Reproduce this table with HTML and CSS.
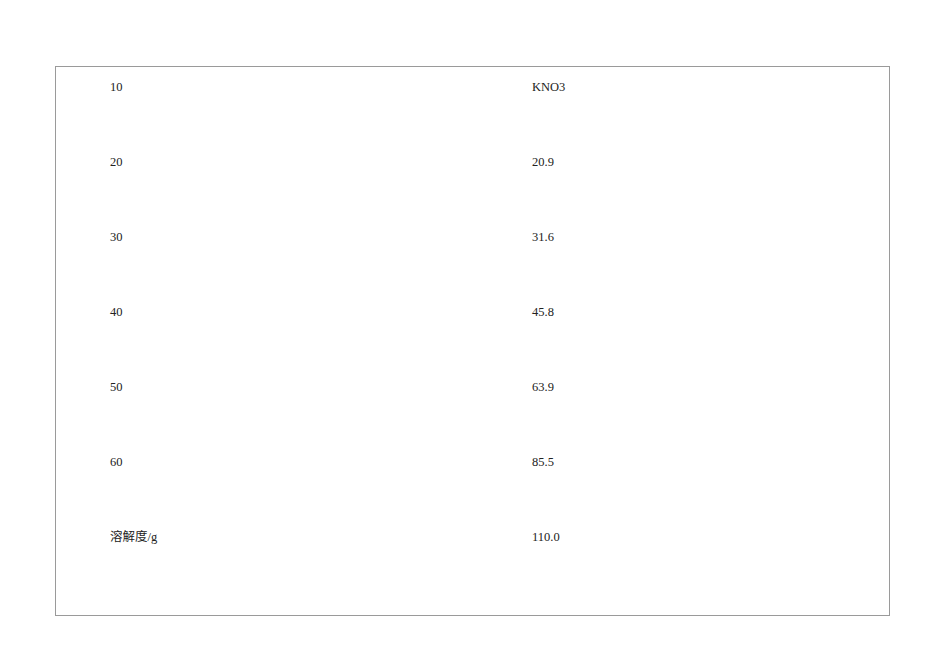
FILE: index.html
```html
<!DOCTYPE html>
<html lang="zh">
<head>
<meta charset="utf-8">
<link rel="stylesheet" href="styles.css">
</head>
<body>
<div class="sheet">
  <div class="row"><span class="cell">10</span><span class="cell">KNO3</span></div>
  <div class="row"><span class="cell">20</span><span class="cell">20.9</span></div>
  <div class="row"><span class="cell">30</span><span class="cell">31.6</span></div>
  <div class="row"><span class="cell">40</span><span class="cell">45.8</span></div>
  <div class="row"><span class="cell">50</span><span class="cell">63.9</span></div>
  <div class="row"><span class="cell">60</span><span class="cell">85.5</span></div>
  <div class="row"><span class="cell">溶解度/g</span><span class="cell">110.0</span></div>
</div>
</body>
</html>
```
FILE: styles.css
```css
html, body {
  margin: 0;
  padding: 0;
  background: #fff;
}
body {
  font-family: "Liberation Serif", "Noto Sans CJK SC", serif;
  font-size: 12.5px;
  color: #222;
}
.sheet {
  box-sizing: border-box;
  margin: 66px 0 0 55px;
  width: 835px;
  height: 550px;
  border: 1px solid #9a9a9a;
  padding: 13px 0 0 54px;
}
.row {
  display: grid;
  grid-template-columns: 422px 1fr;
  height: 75px;
  line-height: 14px;
}
```
